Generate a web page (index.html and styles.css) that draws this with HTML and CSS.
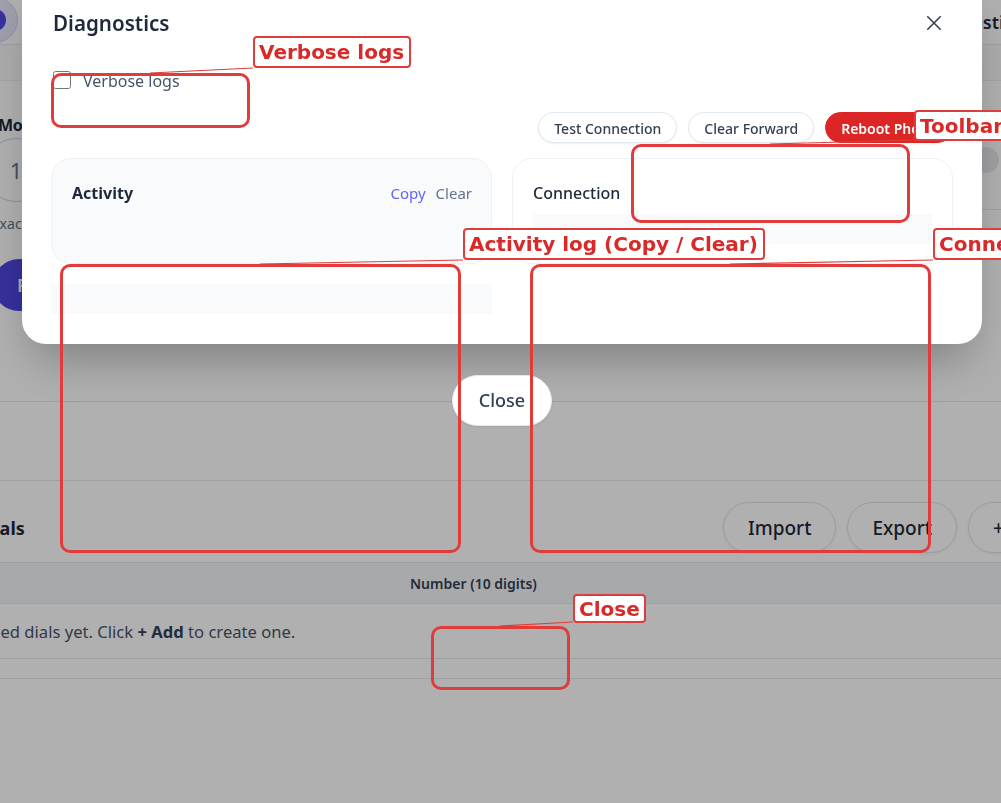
FILE: index.html
```html
<!DOCTYPE html>
<html lang="en">
<head>
<meta charset="utf-8">
<title>Diagnostics</title>
<link rel="stylesheet" href="styles.css">
</head>
<body>
<div class="app">
  <header class="app-header">
    <div class="brand"><span class="brand-dot"></span></div>
    <button class="hdr-btn">Diagnostics</button>
  </header>
  <div class="subbar"></div>
  <section class="dial-panel">
    <div class="panel-left">
      <div class="field-label">Mobile number</div>
      <div class="digit">1</div>
      <div class="hint">exactly 10 digits</div>
      <button class="primary">Forward</button>
    </div>
    <div class="panel-right">
      <div class="mini-card"><span class="mini-dot"></span></div>
    </div>
  </section>
  <div class="mid-block"></div>
  <section class="speed">
    <div class="speed-head">
      <h2 class="speed-title">Speed dials</h2>
      <div class="speed-actions">
        <button class="ghost">Import</button>
        <button class="ghost">Export</button>
        <button class="ghost">+ Add</button>
      </div>
    </div>
    <div class="thead">Number (10 digits)</div>
    <div class="empty-row">No speed dials yet. Click <b>+ Add</b> to create one.</div>
    <div class="table-foot"></div>
  </section>
</div>

<div class="overlay">
  <div class="modal-wrap">
    <div class="modal">
      <div class="modal-head">
        <h1 class="modal-title">Diagnostics</h1>
        <button class="icon-btn" aria-label="Close">
          <svg width="14" height="14" viewBox="0 0 14 14"><path d="M0.8 0.8 L13.2 13.2 M13.2 0.8 L0.8 13.2" stroke="#334155" stroke-width="1.6" stroke-linecap="round" fill="none"/></svg>
        </button>
      </div>
      <label class="check-row"><input type="checkbox" class="check"> <span>Verbose logs</span></label>
      <div class="toolbar">
        <button class="pill">Test Connection</button>
        <button class="pill">Clear Forward</button>
        <button class="pill danger">Reboot Phone</button>
      </div>
      <div class="grid">
        <div class="col">
          <div class="card card-soft">
            <div class="card-head">
              <span class="card-title bold">Activity</span>
              <span class="links"><a class="link copy">Copy</a><a class="link clear">Clear</a></span>
            </div>
            <div class="bar"></div>
          </div>
          <div class="bar log-bar"></div>
        </div>
        <div class="col">
          <div class="card">
            <div class="card-head">
              <span class="card-title">Connection</span>
            </div>
            <div class="bar"></div>
          </div>
        </div>
      </div>
    </div>
    <button class="close-btn">Close</button>
  </div>
</div>

<div class="annot">
  <svg class="annot-lines" width="1001" height="803" viewBox="0 0 1001 803">
    <g stroke="#e03c3c" stroke-width="1.2">
      <line x1="150" y1="73" x2="253" y2="68"/>
      <line x1="770" y1="144" x2="914" y2="140"/>
      <line x1="260" y1="264" x2="463" y2="260"/>
      <line x1="730" y1="264" x2="933" y2="260"/>
      <line x1="500" y1="626" x2="573" y2="622"/>
    </g>
  </svg>
  <div class="abox ab-verbose"></div>
  <div class="abox ab-toolbar"></div>
  <div class="abox ab-activity"></div>
  <div class="abox ab-conn"></div>
  <div class="abox ab-close"></div>
  <div class="alabel al-verbose">Verbose logs</div>
  <div class="alabel al-toolbar">Toolbar</div>
  <div class="alabel al-activity">Activity log (Copy / Clear)</div>
  <div class="alabel al-conn">Connection</div>
  <div class="alabel al-close">Close</div>
</div>
</body>
</html>
```
FILE: styles.css
```css
* { box-sizing: border-box; }
html, body { margin: 0; height: 100%; }
body {
  font-family: "Noto Sans", "Open Sans", sans-serif;
  background: #ffffff;
  color: #1e293b;
  overflow: hidden;
  position: relative;
}
button { font-family: inherit; }

/* ---------- background app ---------- */
.app { width: 1200px; margin-left: -100px; }
.app-header {
  height: 45px;
  display: flex;
  align-items: center;
  padding-left: 72px;
  padding-right: 78px;
  border-bottom: 1px solid #e2e8f0;
}
.brand {
  width: 46px; height: 46px; border-radius: 50%;
  background: #e8e6fb; border: 1px solid #d4d0f5;
  display: flex; align-items: center; justify-content: center;
  margin-top: -4px;
}
.brand-dot { width: 22px; height: 22px; border-radius: 50%; background: #4f46e5; }
.hdr-btn {
  margin-left: auto;
  background: none; border: none;
  font-size: 18px; font-weight: 600; color: #1e293b;
  padding: 0;
}
.subbar { height: 36px; border-bottom: 1px solid #eceff3; background: #fafafa; }

.dial-panel { display: flex; height: 321px; border-bottom: 1px solid #e2e8f0; }
.panel-left {
  width: 1060px;
  padding-left: 98px;
  padding-top: 32px;
  display: flex; flex-direction: column; align-items: flex-start;
}
.field-label { font-size: 16px; font-weight: 700; line-height: 24px; color: #1e293b; letter-spacing: -0.3px; }
.digit {
  width: 64px; height: 64px; border-radius: 50%;
  border: 1px solid #cbd5e1;
  margin-left: -14px; margin-top: 1px;
  display: flex; align-items: center; justify-content: center;
  font-size: 22px; color: #64748b;
}
.hint { margin-left: -6px; margin-top: 12px; font-size: 14px; line-height: 20px; color: #64748b; }
.primary {
  margin-left: -5px; margin-top: 25px;
  height: 52px; padding: 0 24px; border-radius: 26px; border: none;
  background: #4f46e5; color: #ffffff; font-size: 18px; font-weight: 600;
}
.panel-right { padding-top: 59px; }
.mini-card {
  width: 140px; height: 70px; border-radius: 18px; border: 1px solid #e2e8f0;
  padding: 6px 0 0 12px;
}
.mini-dot { display: block; width: 26px; height: 26px; border-radius: 50%; background: #e6e8ec; }

.mid-block { height: 79px; border-bottom: 1px solid #e2e8f0; }

.speed-head {
  display: flex; align-items: center;
  padding: 21px 0 9px;
  border-bottom: 1px solid #e2e8f0;
}
.speed-title {
  margin: 0; width: 823px; padding-left: 24px;
  font-size: 18px; font-weight: 700; color: #1e293b;
}
.speed-actions { display: flex; gap: 11px; }
.ghost {
  height: 51px; padding: 0 24px; border-radius: 26px;
  border: 1px solid #dfe4ea; background: #ffffff;
  font-size: 19px; font-weight: 500; color: #1e293b;
  box-shadow: 0 1px 3px rgba(0,0,0,0.06);
}
.thead {
  height: 41px; line-height: 41px; padding-left: 510px;
  background: #f3f5f8; border-bottom: 1px solid #e2e8f0;
  font-size: 14px; font-weight: 600; color: #334155;
}
.empty-row {
  height: 55px; line-height: 56px; padding-left: 46px;
  border-bottom: 1px solid #e2e8f0;
  font-size: 16.6px; color: #475569;
}
.empty-row b { color: #334155; }
.table-foot { height: 20px; border-bottom: 1px solid #e2e8f0; }

/* ---------- modal ---------- */
.overlay { position: fixed; inset: 0; background: rgba(0,0,0,0.31); }
.modal-wrap {
  width: 960px; margin-left: 22px;
  display: flex; flex-direction: column; align-items: center;
}
.modal {
  width: 100%;
  margin-top: -24px;
  background: #ffffff;
  border-radius: 24px;
  padding: 34px 29px 30px;
  box-shadow: 0 25px 50px -12px rgba(0,0,0,0.3);
}
.modal-head { display: flex; align-items: center; justify-content: space-between; height: 26px; }
.modal-title { margin: 0; font-size: 20.6px; font-weight: 600; line-height: 26px; color: #1e293b; padding-left: 2px; }
.icon-btn {
  width: 28px; height: 28px; border: none; background: none; padding: 0;
  display: flex; align-items: center; justify-content: center;
  margin-right: 5px;
}
.check-row {
  display: flex; align-items: center; gap: 12px;
  margin-top: 33px; height: 24px;
  font-size: 16px; color: #475569;
}
.check { width: 18px; height: 18px; margin: -2px 0 0 2px; }
.toolbar { display: flex; justify-content: flex-end; gap: 11px; margin-top: 19px; }
.pill {
  height: 31px; padding: 1px 15px 0; border-radius: 16px;
  border: 1px solid #e2e8f0; background: #ffffff;
  font-size: 14px; font-weight: 500; color: #334155;
  box-shadow: 0 1px 2px rgba(15,23,42,0.06);
}
.pill.danger { background: #dc2626; border-color: #dc2626; color: #ffffff; font-weight: 600; }

.grid { display: grid; grid-template-columns: 1fr 1fr; gap: 20px; margin-top: 15px; align-items: start; }
.col { display: flex; flex-direction: column; gap: 20px; }
.card {
  border: 1px solid #eef2f6; border-radius: 20px; background: #ffffff;
  padding: 19px 20px 19px;
}
.card-soft { background: #f8fafc; }
.card-head { display: flex; align-items: center; justify-content: space-between; height: 30px; }
.card-title { font-size: 16px; font-weight: 500; color: #1e293b; }
.card-title.bold { font-weight: 700; }
.links { display: flex; gap: 10px; font-size: 15px; margin-right: -1px; }
.link.copy { color: #6366f1; }
.link.clear { color: #64748b; }
.bar { height: 30px; margin-top: 6px; background: #f8fafc; }
.log-bar { margin-top: 0; }

.close-btn {
  margin-top: 31px;
  padding: 12px 26px; line-height: 25px;
  border-radius: 26px; border: 1px solid #e2e8f0; background: #ffffff;
  font-size: 18px; font-weight: 500; color: #334155;
  box-shadow: 0 1px 3px rgba(0,0,0,0.08);
}

/* ---------- annotation layer ---------- */
.annot { position: fixed; inset: 0; pointer-events: none; }
.annot-lines { position: absolute; left: 0; top: 0; }
.abox { position: absolute; border: 3px solid #e03c3c; border-radius: 10px; }
.ab-verbose { left: 51px; top: 73px; width: 199px; height: 55px; }
.ab-toolbar { left: 631px; top: 144px; width: 279px; height: 79px; }
.ab-activity { left: 60px; top: 264px; width: 401px; height: 289px; }
.ab-conn { left: 530px; top: 264px; width: 401px; height: 289px; }
.ab-close { left: 431px; top: 626px; width: 139px; height: 64px; }
.alabel {
  position: absolute;
  background: #ffffff; border: 2px solid #e03c3c; border-radius: 4px;
  font-family: "DejaVu Sans", sans-serif; font-weight: 700; color: #d92a2a;
  font-size: 20px;
  display: flex; align-items: center; padding-left: 4px;
  white-space: nowrap; overflow: hidden;
}
.al-verbose { left: 253px; top: 36px; width: 158px; height: 32px; }
.al-toolbar { left: 914px; top: 110px; width: 110px; height: 31px; }
.al-activity { left: 463px; top: 228px; width: 302px; height: 32px; }
.al-conn { left: 933px; top: 228px; width: 160px; height: 32px; }
.al-close { left: 573px; top: 594px; width: 73px; height: 29px; }
```
